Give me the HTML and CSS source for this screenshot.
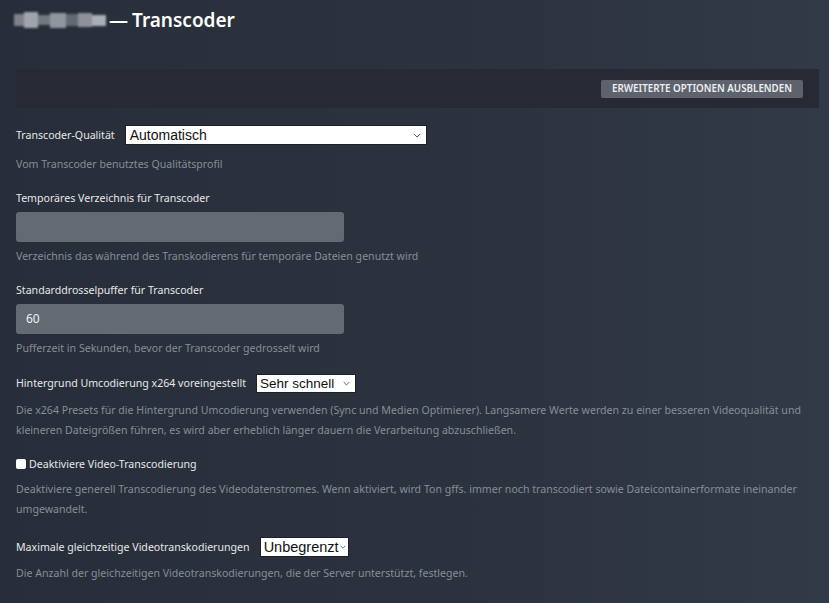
FILE: index.html
```html
<!DOCTYPE html>
<html lang="de">
<head>
<meta charset="utf-8">
<title>Transcoder</title>
<link rel="stylesheet" href="styles.css">
</head>
<body>
<div class="page">
  <h1 class="title">
    <span class="blurred" aria-hidden="true">
      <i class="px p1"></i><i class="px p2"></i><i class="px p3"></i><i class="px p4"></i><i class="px p5"></i><i class="px p6"></i><i class="px p7"></i>
    </span>
    <span class="dash">—</span><span class="name">Transcoder</span>
  </h1>

  <div class="bar">
    <button class="btn">ERWEITERTE OPTIONEN AUSBLENDEN</button>
  </div>

  <div class="field f1">
    <div class="row">
      <span class="label">Transcoder-Qualität</span>
      <div class="select sel-quality"><span>Automatisch</span><svg class="chev" viewBox="0 0 10 6" width="8" height="5"><path d="M1 1l4 4 4-4" fill="none" stroke="#444" stroke-width="1.2"/></svg></div>
    </div>
    <p class="help">Vom Transcoder benutztes Qualitätsprofil</p>
  </div>

  <div class="field f2">
    <div class="label block">Temporäres Verzeichnis für Transcoder</div>
    <div class="input"></div>
    <p class="help">Verzeichnis das während des Transkodierens für temporäre Dateien genutzt wird</p>
  </div>

  <div class="field f3">
    <div class="label block">Standarddrosselpuffer für Transcoder</div>
    <div class="input">60</div>
    <p class="help">Pufferzeit in Sekunden, bevor der Transcoder gedrosselt wird</p>
  </div>

  <div class="field f4">
    <div class="row">
      <span class="label">Hintergrund Umcodierung x264 voreingestellt</span>
      <div class="select sel-preset"><span>Sehr schnell</span><svg class="chev" viewBox="0 0 10 6" width="7" height="5"><path d="M1 1l4 4 4-4" fill="none" stroke="#444" stroke-width="1.2"/></svg></div>
    </div>
    <p class="help">Die x264 Presets für die Hintergrund Umcodierung verwenden (Sync und Medien Optimierer). Langsamere Werte werden zu einer besseren Videoqualität und kleineren Dateigrößen führen, es wird aber erheblich länger dauern die Verarbeitung abzuschließen.</p>
  </div>

  <div class="field f5">
    <label class="check"><span class="box"></span><span class="label">Deaktiviere Video-Transcodierung</span></label>
    <p class="help">Deaktiviere generell Transcodierung des Videodatenstromes. Wenn aktiviert, wird Ton gffs. immer noch transcodiert sowie Dateicontainerformate ineinander umgewandelt.</p>
  </div>

  <div class="field f6">
    <div class="row">
      <span class="label">Maximale gleichzeitige Videotranskodierungen</span>
      <div class="select sel-max"><span>Unbegrenzt</span><svg class="chev" viewBox="0 0 10 6" width="6" height="4"><path d="M1 1l4 4 4-4" fill="none" stroke="#444" stroke-width="1.3"/></svg></div>
    </div>
    <p class="help">Die Anzahl der gleichzeitigen Videotranskodierungen, die der Server unterstützt, festlegen.</p>
  </div>
</div>
</body>
</html>
```

FILE: styles.css
```css
* { box-sizing: border-box; }
html, body { margin: 0; height: 100%; }
body {
  background: linear-gradient(90deg, #282e39 0%, #2c333f 60%, #333a47 100%);
  font-family: "Noto Sans", "Open Sans", sans-serif;
  color: #e4e5e7;
  overflow: hidden;
}
.page {
  padding: 0 10px 0 16px;
}
.title {
  margin: 0;
  height: 40px;
  display: flex;
  align-items: center;
  font-size: 19px;
  font-weight: 600;
  color: #ffffff;
  line-height: 1;
}
.blurred {
  display: flex;
  align-items: center;
  margin-left: -2px;
  width: 92px;
  height: 20px;
  filter: blur(1.2px);
  opacity: 0.85;
}
.px { display: block; height: 14px; }
.p1 { width: 10px; background: #8c919a; height: 12px; }
.p2 { width: 14px; background: #b5b9bf; height: 16px; }
.p3 { width: 12px; background: #7f858f; height: 10px; }
.p4 { width: 16px; background: #a3a8b0; height: 15px; }
.p5 { width: 12px; background: #6f7580; height: 12px; }
.p6 { width: 14px; background: #9ea3ab; height: 14px; }
.p7 { width: 14px; background: #c2c5ca; height: 11px; }
.dash { margin-left: 3px; margin-right: 4px; }

.bar {
  margin-top: 29px;
  height: 39px;
  background: #252a34;
  display: flex;
  align-items: center;
  justify-content: flex-end;
  padding-right: 16px;
}
.btn {
  height: 18px;
  width: 202px;
  padding: 0;
  border: 0;
  border-radius: 2px;
  background: #5d626d;
  color: #eceef0;
  font-family: "Noto Sans", "Open Sans", sans-serif;
  font-size: 9.8px;
  font-weight: 600;
}

.label { font-size: 10.6px; line-height: 20px; color: #e6e7e9; }
.block { display: block; }
.help {
  margin: 0;
  font-size: 10.6px;
  line-height: 20px;
  color: #878d97;
  max-width: 800px;
}
.row { display: flex; align-items: center; height: 20px; gap: 10px; }

.select {
  display: flex;
  align-items: center;
  justify-content: space-between;
  background: #ffffff;
  border: 1px solid #1c2028;
  color: #111;
  font-family: "Liberation Sans", "Noto Sans", sans-serif;
}
.sel-quality { width: 302px; height: 20px; font-size: 14px; padding: 0 5px 0 4px; }
.sel-preset { width: 100px; height: 19px; font-size: 13.5px; padding: 0 5px 0 3px; }
.sel-max { width: 89px; height: 20px; font-size: 14.5px; padding: 0 2px 0 3px; }

.input {
  width: 328px;
  height: 30px;
  background: #646a74;
  border-radius: 3px;
  margin-top: 4px;
  padding-left: 10px;
  font-size: 12px;
  line-height: 30px;
  color: #eef0f2;
}

.f1 { margin-top: 17px; }
.f1 .help { margin-top: 9px; }
.f2 { margin-top: 14px; }
.f2 .help, .f3 .help { margin-top: 4px; }
.f3 { margin-top: 14px; }
.f4 { margin-top: 15px; }
.f4 .help { margin-top: 7px; }
.f5 { margin-top: 14px; }
.f5 .help { margin-top: 5px; }
.f6 { margin-top: 18px; }
.f6 .help { margin-top: 6px; }

.check { display: flex; align-items: center; height: 20px; }
.box {
  width: 10px; height: 10px;
  background: #ffffff;
  border-radius: 2px;
  margin-right: 3px;
}
```
